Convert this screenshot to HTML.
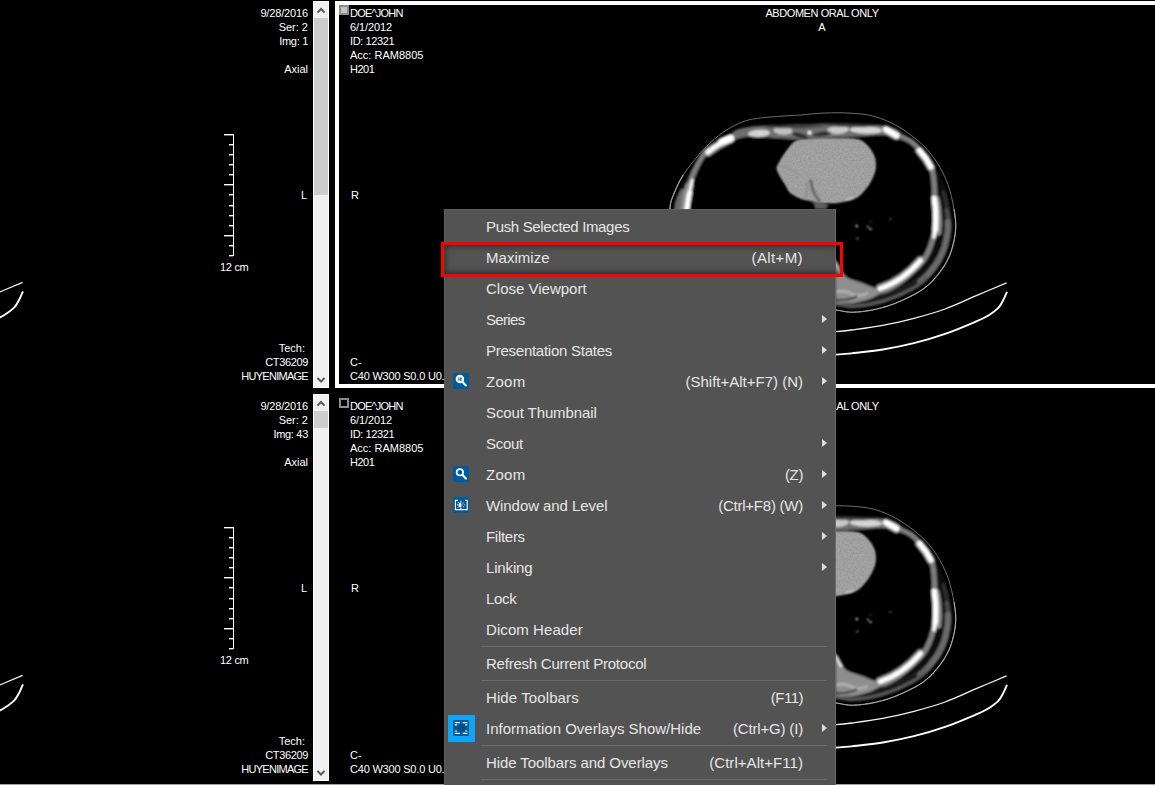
<!DOCTYPE html>
<html lang="en">
<head>
<meta charset="utf-8">
<title>Viewer</title>
<style>
html,body{margin:0;padding:0;background:#000;}
body{width:1155px;height:785px;position:relative;overflow:hidden;font-family:"Liberation Sans",sans-serif;color:#fff;}
.t{position:absolute;font-size:11px;line-height:14px;height:14px;white-space:pre;color:#fff;}
.sb{position:absolute;left:313px;width:14px;background:#f0f0f0;border:1px solid #fff;}
.sb .th{position:absolute;left:0;width:14px;background:#cdcdcd;}
.sb svg{position:absolute;left:0;display:block;}
.vp1{position:absolute;left:335px;top:1px;width:900px;height:379px;border:4px solid #fff;}
.cb{position:absolute;width:6px;height:6px;border:2px solid #8c8c8c;}
#ct{position:absolute;left:0;top:0;}
.menu{position:absolute;left:444px;top:209px;width:392px;height:600px;background:#535353;box-sizing:border-box;border-top:1px solid #5e5e5e;border-left:1px solid #5e5e5e;border-right:1px solid #6a6a6a;}
.mi{position:absolute;left:-1px;width:392px;height:31px;font-size:15px;line-height:31px;color:#e6e6e6;}
.mi .l{position:absolute;left:42px;top:0;white-space:pre;}
.mi .k{position:absolute;right:33px;top:0;white-space:pre;}
.mi .a{position:absolute;left:378px;top:11px;width:0;height:0;border-left:5px solid #dedede;border-top:4.5px solid transparent;border-bottom:4.5px solid transparent;}
.sep{position:absolute;left:36px;width:346px;height:1px;background:#6b6b6b;}
.ic{position:absolute;left:9px;width:16px;height:16px;}
.hl{position:absolute;left:441px;top:242px;width:396px;height:29px;border:3px solid #f00;box-shadow:inset 0 0 6px 1px rgba(0,0,0,.55);}
.bl{position:absolute;left:0;top:784px;width:1155px;height:1px;background:#a0a0a0;}
</style>
</head>
<body>
<svg id="ct" width="1155" height="785" viewBox="0 0 1155 785">
<defs><filter id="bl" filterUnits="userSpaceOnUse" x="640" y="90" width="400" height="300"><feGaussianBlur stdDeviation="0.9"/></filter><filter id="nz" filterUnits="userSpaceOnUse" x="640" y="90" width="400" height="300"><feGaussianBlur in="SourceGraphic" stdDeviation="0.9" result="b"/><feTurbulence type="fractalNoise" baseFrequency="0.6" numOctaves="2" seed="7" result="n"/><feColorMatrix in="n" type="matrix" values="2.2 0 0 0 -0.5  2.2 0 0 0 -0.5  2.2 0 0 0 -0.5  0 0 0 0 0.07" result="w"/><feMerge result="m"><feMergeNode in="b"/><feMergeNode in="w"/></feMerge><feComposite in="m" in2="b" operator="in"/></filter></defs>
<g id="slice">
<path d="M825.0 113.0C833.5 112.7 842.8 112.6 851.0 113.2C859.2 113.8 866.7 114.2 874.5 116.4C882.3 118.6 890.2 122.0 898.0 126.5C905.8 131.0 914.8 137.6 921.3 143.6C927.8 149.6 932.5 155.5 936.9 162.3C941.3 169.1 944.9 176.4 947.8 184.2C950.6 192.0 952.7 201.2 954.0 209.0C955.3 216.8 956.2 223.4 955.5 231.0C954.8 238.6 952.8 247.5 950.0 254.5C947.2 261.5 943.4 267.5 939.0 273.2C934.6 278.9 930.0 284.1 923.5 288.8C917.0 293.5 907.8 297.9 900.0 301.3C892.2 304.7 884.6 307.2 876.8 309.0C869.0 310.8 860.2 312.0 853.4 312.2C846.6 312.4 842.7 310.9 836.0 310.0C829.3 309.1 820.7 307.0 813.0 307.0C805.3 307.0 796.7 309.1 790.0 310.0C783.3 310.9 779.4 312.4 772.6 312.2C765.8 312.0 756.8 310.9 749.0 309.0C741.2 307.1 733.8 304.4 726.0 301.0C718.2 297.6 709.0 293.5 702.5 288.8C696.0 284.1 691.4 278.7 687.0 273.0C682.6 267.3 678.8 261.5 676.0 254.5C673.2 247.5 671.5 238.8 670.5 231.0C669.5 223.2 669.4 213.8 670.0 207.5C670.6 201.2 671.8 198.9 674.0 193.5C676.2 188.1 679.2 181.3 683.4 174.8C687.6 168.3 693.8 160.5 699.0 154.5C704.2 148.5 709.3 143.4 714.5 139.0C719.7 134.6 724.5 131.1 730.0 128.0C735.5 124.9 740.8 122.1 747.3 120.3C753.8 118.5 760.2 118.0 769.0 117.1C777.8 116.2 790.7 115.7 800.0 115.0C809.3 114.3 816.5 113.3 825.0 113.0Z" fill="none" stroke="#6c6c6c" stroke-width="1"/>
<path d="M954.0 209.0L954.3 210.9L954.6 212.8L954.9 214.7L955.1 216.5L955.3 218.3L955.5 220.1L955.6 221.9L955.7 223.7L955.7 225.5L955.7 227.3L955.6 229.1L955.5 231.0L955.3 232.9L955.1 234.9L954.7 236.9L954.4 238.9L954.0 240.9L953.5 243.0L953.0 245.0L952.5 247.0L951.9 248.9L951.3 250.8L950.7 252.7L950.0 254.5L949.3 256.2L948.5 257.9L947.7 259.6L946.9 261.2L946.0 262.8L945.1 264.3L944.2 265.9L943.2 267.4L942.2 268.9L941.2 270.3L940.1 271.8L939.0 273.2L937.9 274.6L936.8 276.0L935.6 277.4L934.5 278.7L933.3 280.1L932.0 281.4L930.8 282.7L929.4 283.9L928.0 285.2L926.6 286.4L925.1 287.6L923.5 288.8L921.8 290.0L920.0 291.1L918.2 292.3L916.2 293.4L914.3 294.5L912.2 295.5L910.2 296.6L908.1 297.6L906.0 298.6L904.0 299.5L902.0 300.4L900.0 301.3L898.1 302.1L896.1 302.9L894.2 303.7L892.3 304.4L890.3 305.1L888.4 305.7L886.5 306.4L884.5 306.9L882.6 307.5L880.7 308.0L878.7 308.5L876.8 309.0L874.8 309.4L872.8 309.9L870.8 310.2L868.8 310.6L866.8 310.9L864.7 311.2L862.7 311.5L860.8 311.7L858.8 311.9L857.0 312.0L855.1 312.1L853.4 312.2L851.8 312.2L850.2 312.2L848.8 312.0L847.4 311.9L846.0 311.7L844.7 311.5L843.3 311.2L842.0 311.0L840.6 310.7L839.2 310.5L837.6 310.2L836.0 310.0L834.3 309.8L832.5 309.5L830.6 309.2L828.7 308.8L826.8 308.5L824.9 308.2L822.9 307.9L820.9 307.6L818.9 307.3L816.9 307.2L814.9 307.0L813.0 307.0L811.1 307.0L809.1 307.2L807.1 307.3L805.1 307.6L803.1 307.9L801.1 308.2L799.2 308.5L797.3 308.8L795.4 309.2L793.5 309.5L791.7 309.8L790.0 310.0" fill="none" stroke="#a8a8a8" stroke-width="1.1"/>
<path d="M790.0 310.0L788.4 310.2L786.8 310.5L785.4 310.7L784.0 311.0L782.7 311.2L781.3 311.5L780.0 311.7L778.7 311.9L777.3 312.0L775.8 312.2L774.2 312.2L772.6 312.2L770.8 312.1L769.0 312.0L767.1 311.9L765.2 311.7L763.2 311.5L761.2 311.2L759.1 310.9L757.1 310.6L755.0 310.3L753.0 309.9L751.0 309.5L749.0 309.0L747.1 308.5L745.1 308.0L743.2 307.4L741.3 306.8L739.4 306.2L737.5 305.6L735.6 304.9L733.7 304.2L731.8 303.4L729.9 302.6L727.9 301.8L726.0 301.0L724.0 300.1L722.0 299.3L720.0 298.3L717.9 297.4L715.8 296.4L713.8 295.4L711.7 294.4L709.8 293.3L707.8 292.2L706.0 291.1L704.2 290.0L702.5 288.8L700.9 287.6L699.4 286.4L698.0 285.2L696.6 283.9L695.2 282.6L694.0 281.3L692.7 280.0L691.5 278.6L690.4 277.2L689.2 275.8L688.1 274.4L687.0 273.0L685.9 271.6L684.8 270.1L683.8 268.7L682.8 267.2L681.8 265.7L680.9 264.2L680.0 262.7L679.1 261.1L678.3 259.5L677.5 257.9L676.7 256.2L676.0 254.5L675.3 252.7L674.7 250.9L674.1 249.0L673.6 247.0L673.1 245.1L672.6 243.1L672.2 241.0L671.8 239.0L671.4 237.0L671.1 235.0L670.8 233.0L670.5 231.0L670.3 229.0L670.1 227.0L669.9 224.9L669.8 222.8L669.7 220.7L669.7 218.7L669.6 216.6L669.6 214.6L669.7 212.7L669.8 210.9L669.9 209.1L670.0 207.5L670.2 206.0L670.3 204.7L670.6 203.4L670.8 202.3L671.1 201.2L671.4 200.2L671.7 199.2L672.1 198.2L672.5 197.1L673.0 196.0L673.5 194.8L674.0 193.5L674.6 192.1L675.2 190.7L675.8 189.2L676.5 187.7L677.2 186.1L678.0 184.5L678.8 182.9L679.6 181.3L680.5 179.7L681.4 178.1L682.4 176.4L683.4 174.8" fill="none" stroke="#a8a8a8" stroke-width="1.1"/>
<g filter="url(#bl)">
<path d="M825.0 123.5C833.5 123.4 843.2 123.8 851.0 124.0C858.8 124.2 865.8 124.1 872.0 124.5C878.2 124.9 883.5 125.4 888.0 126.5C892.5 127.6 894.0 127.8 899.0 131.0C904.0 134.2 912.3 140.5 918.0 146.0C923.7 151.5 928.7 157.5 933.0 164.0C937.3 170.5 941.2 177.5 944.0 185.0C946.8 192.5 948.8 201.3 950.0 209.0C951.2 216.7 952.2 223.6 951.5 231.0C950.8 238.4 948.7 246.8 946.0 253.5C943.3 260.2 939.8 265.6 935.5 271.0C931.2 276.4 926.8 281.5 920.5 286.0C914.2 290.5 905.5 294.8 898.0 298.0C890.5 301.2 883.0 303.8 875.5 305.5C868.0 307.2 859.6 308.3 853.0 308.5C846.4 308.7 842.7 307.2 836.0 306.5C829.3 305.8 820.7 304.1 813.0 304.0C805.3 303.9 796.7 305.2 790.0 306.0C783.3 306.8 779.6 308.6 773.0 308.5C766.4 308.4 758.0 307.2 750.5 305.5C743.0 303.8 735.5 301.2 728.0 298.0C720.5 294.8 711.8 290.5 705.5 286.0C699.2 281.5 694.8 276.4 690.5 271.0C686.2 265.6 682.7 260.2 680.0 253.5C677.3 246.8 675.5 238.7 674.5 231.0C673.5 223.3 673.5 213.7 674.0 207.5C674.5 201.3 675.3 199.3 677.5 194.0C679.7 188.7 682.9 181.8 687.0 175.5C691.1 169.2 697.0 162.2 702.0 156.5C707.0 150.8 711.8 145.6 717.0 141.5C722.2 137.4 727.7 134.4 733.0 132.0C738.3 129.6 743.0 128.1 749.0 127.0C755.0 125.9 760.5 125.9 769.0 125.5C777.5 125.1 790.7 124.8 800.0 124.5C809.3 124.2 816.5 123.6 825.0 123.5Z" fill="#101010"/>
<path d="M943.6 192.1L944.1 194.1L944.7 196.1L945.2 198.1L945.7 200.2L946.1 202.2L946.5 204.2L946.9 206.2L947.3 208.2L947.6 210.1L947.9 211.9L948.2 213.8L948.4 215.5L948.7 217.3L948.8 219.0L949.0 220.6L949.1 222.3L949.2 223.9L949.2 225.5L949.2 227.1L949.1 228.8L949.0 230.4L948.8 232.2" fill="none" stroke="#2e2e2e" stroke-width="4" stroke-linecap="round"/>
<path d="M946.9 210.2L947.2 212.1L947.5 213.9L947.7 215.6L948.0 217.4L948.2 219.0L948.3 220.7L948.4 222.3L948.5 223.9L948.5 225.5L948.5 227.1L948.4 228.7" fill="none" stroke="#4a4a4a" stroke-width="4.5" stroke-linecap="round"/>
<path d="M948.0 222.3L948.1 223.9L948.1 225.5L948.1 227.1L948.0 228.7L947.9 230.3L947.8 232.1L947.5 233.8L947.2 235.6L946.9 237.5L946.5 239.4L946.1 241.2L945.7 243.1L945.2 244.9L944.7 246.7L944.1 248.5L943.5 250.1L942.9 251.7L942.3 253.3L941.6 254.7L940.9 256.2L940.2 257.6L939.4 259.0L938.6 260.4L937.8 261.8L936.9 263.2L936.0 264.5L935.0 265.9L934.0 267.2L933.0 268.6L931.9 269.9L930.9 271.2L929.8 272.5L928.8 273.7L927.7 274.9L926.6 276.1L925.4 277.3L924.3 278.4L923.0 279.5L921.8 280.5L920.5 281.6" fill="none" stroke="#6a6a6a" stroke-width="6.4" stroke-linecap="round"/>
<path d="M926.6 278.4L925.3 279.5L924.1 280.7L922.8 281.8L921.4 282.9L920.0 283.9L918.5 285.0L916.8 286.0L915.1 287.1L913.3 288.2L911.4 289.2L909.5 290.2L907.5 291.2L905.5 292.2L903.5 293.2L901.5 294.1L899.5 295.0L897.6 295.8L895.8 296.6L893.9 297.3L892.0 298.1L890.2 298.8L888.4 299.4L886.5 300.0L884.7 300.6L882.8 301.2L881.0 301.7L879.1 302.2L877.3 302.7L875.4 303.2L873.6 303.6L871.7 304.0L869.7 304.3L867.8 304.7L865.9 305.0L863.9 305.3L862.0 305.5L860.1 305.7L858.3 305.9L856.5 306.0L854.9 306.1L853.3 306.2L851.8 306.2L850.5 306.2L849.3 306.1L848.1 305.9L846.9 305.8L845.7 305.6L844.4 305.3L843.1 305.1L841.7 304.8L840.2 304.6L838.5 304.3L836.8 304.1L835.2 303.8" fill="none" stroke="#585858" stroke-width="3.6" stroke-linecap="round"/>
<path d="M756.1 304.4L754.2 304.0L752.3 303.6L750.4 303.2L748.6 302.7L746.8 302.2L744.9 301.7L743.1 301.1L741.3 300.5L739.5 299.9L737.7 299.2L735.8 298.6L734.0 297.8L732.1 297.1L730.3 296.3L728.4 295.5L726.4 294.6L724.5 293.8L722.5 292.9L720.4 291.9L718.4 291.0L716.5 290.0L714.5 289.0L712.6 288.0L710.8 287.0L709.1 286.0L707.5 285.0L706.0 283.9L704.6 282.9L703.2 281.8L701.9 280.7L700.7 279.5L699.5 278.4L698.3 277.2L697.2 275.9L696.1 274.7L695.0 273.4L693.9 272.1L692.8 270.7L691.8 269.3L690.7 268.0L689.7 266.6L688.7 265.2L687.8 263.9L686.9 262.5L686.0 261.1L685.2 259.7L684.4 258.3L683.6 256.8L682.9 255.4L682.2 253.9L681.6 252.3L681.0 250.7L680.4 249.0L679.9 247.3" fill="none" stroke="#585858" stroke-width="3.6" stroke-linecap="round"/>
<path d="M683.1 251.7L682.5 250.2L681.9 248.5L681.4 246.8L680.9 245.1L680.4 243.2L680.0 241.4L679.6 239.5L679.2 237.6L678.9 235.7L678.6 233.8L678.3 231.9L678.0 230.1L677.8 228.2L677.6 226.3L677.5 224.4L677.4 222.4L677.3 220.5L677.3 218.5L677.2 216.6L677.2 214.7L677.3 212.9L677.4 211.2L677.4 209.7L677.6 208.2L677.7 206.9L677.9 205.8L678.0 204.9L678.2 204.0L678.4 203.3L678.6 202.5L678.9 201.7L679.2 200.9L679.6 199.9L680.0 198.9L680.5 197.7L681.0 196.4L681.6 195.0L682.2 193.7L682.8 192.3" fill="none" stroke="#6a6a6a" stroke-width="6.4" stroke-linecap="round"/>
<path d="M747.3 136.6C753.5 136.0 761.5 137.0 769.0 137.4C776.5 137.8 785.7 138.8 792.5 139.0C799.3 139.2 802.9 138.8 810.0 138.5C817.1 138.2 827.3 137.8 835.0 137.5C842.7 137.2 847.6 137.0 856.0 136.6C864.4 136.2 878.2 134.6 885.5 135.0C892.8 135.4 895.3 137.0 900.0 139.0C904.7 141.0 908.7 141.9 913.5 146.8C918.3 151.7 925.9 159.8 929.0 168.6C932.1 177.4 931.6 190.6 932.2 199.7C932.9 208.8 933.3 216.6 932.9 223.4C932.5 230.2 931.5 234.8 929.7 240.5C927.9 246.2 926.0 252.0 921.9 257.7C917.8 263.4 910.2 270.1 904.8 274.8C899.3 279.5 893.6 283.4 889.2 285.7C884.8 288.0 883.0 289.3 878.3 288.8C873.6 288.3 866.7 284.7 861.2 282.6C855.8 280.5 849.8 279.8 845.6 276.4C841.4 273.0 839.5 266.7 836.2 262.3C832.9 257.9 829.9 252.9 826.0 250.0C822.1 247.1 817.3 245.0 813.0 245.0C808.7 245.0 803.9 247.1 800.0 250.0C796.1 252.9 793.1 257.9 789.8 262.3C786.5 266.7 784.6 273.0 780.4 276.4C776.2 279.8 770.2 280.5 764.8 282.6C759.3 284.7 752.4 288.3 747.7 288.8C743.0 289.3 741.2 288.0 736.8 285.7C732.4 283.4 726.7 279.5 721.2 274.8C715.8 270.1 708.2 263.4 704.1 257.7C700.0 252.0 698.3 246.2 696.3 240.5C694.3 234.8 693.1 228.9 692.0 223.4C690.9 217.9 689.4 214.6 689.6 207.5C689.9 200.4 690.6 189.8 693.5 181.0C696.4 172.2 702.4 160.3 706.8 154.5C711.2 148.7 715.9 148.2 720.0 146.0C724.1 143.8 727.2 142.6 731.7 141.0C736.2 139.4 741.1 137.2 747.3 136.6Z" fill="none" stroke="#7e7e7e" stroke-width="10.5" stroke-linejoin="round"/>
<path d="M928.1 268.9L927.1 270.2L926.1 271.3L925.0 272.5L924.0 273.6L922.9 274.7L921.8 275.7L920.7 276.8L919.5 277.8L918.3 278.7L917.0 279.7L915.6 280.7L914.1 281.6L912.5 282.6L910.7 283.6L908.9 284.6L907.1 285.6L905.2 286.6L903.2 287.5L901.3 288.4L899.4 289.3L897.4 290.2L895.6 291.0L893.8 291.8L892.0 292.5L890.2 293.2L888.4 293.9L886.6 294.5L884.9 295.1L883.1 295.7L881.3 296.2L879.6 296.7L877.8 297.2L876.0 297.7L874.3 298.1L872.5 298.5L870.6 298.9L868.8 299.2L866.9 299.6L865.1 299.9L863.2 300.1L861.4 300.4L859.6 300.6L857.9 300.7L856.2 300.9L854.6 300.9L853.2 301.0L851.9 301.0L850.8 301.0L849.8 300.9L848.7 300.8L847.7 300.6L846.6 300.5" fill="none" stroke="#2a2a2a" stroke-width="1.6" stroke-linecap="round"/>
<path d="M733.0 132.0C736.0 129.0 743.0 128.1 749.0 127.0C755.0 125.9 760.5 125.9 769.0 125.5C777.5 125.1 790.7 124.8 800.0 124.5C809.3 124.2 816.5 123.6 825.0 123.5C833.5 123.4 843.2 123.8 851.0 124.0C858.8 124.2 865.8 124.1 872.0 124.5C878.2 124.9 883.5 125.4 888.0 126.5C892.5 127.6 896.8 128.6 899.0 131.0C901.2 133.4 903.3 140.0 901.0 141.0C898.7 142.0 892.5 137.3 885.0 137.0C877.5 136.7 868.5 138.3 856.0 139.0C843.5 139.7 824.3 140.8 810.0 141.0C795.7 141.2 780.5 140.3 770.0 140.0C759.5 139.7 753.5 138.2 747.0 139.0C740.5 139.8 733.3 146.2 731.0 145.0C728.7 143.8 730.0 135.0 733.0 132.0Z" fill="#6e6e6e"/>
<path d="M836 258Q846 278 862 284Q874 289 884 290Q876 299 852 303.5L836 303Z" fill="#8e8e8e"/>
<path d="M836 292Q846 290 852 294Q858 298 868 293" fill="none" stroke="#b0b0b0" stroke-width="3"/>
<path d="M836.5 262L841 272.5" fill="none" stroke="#f0f0f0" stroke-width="3.2" stroke-linecap="round"/>
<path d="M836 300.5Q850 300.5 857 296" fill="none" stroke="#262626" stroke-width="2"/>
<path d="M747.3 136.6C753.5 136.0 761.5 137.0 769.0 137.4C776.5 137.8 785.7 138.8 792.5 139.0C799.3 139.2 802.9 138.8 810.0 138.5C817.1 138.2 827.3 137.8 835.0 137.5C842.7 137.2 847.6 137.0 856.0 136.6C864.4 136.2 878.2 134.6 885.5 135.0C892.8 135.4 895.3 137.0 900.0 139.0C904.7 141.0 908.7 141.9 913.5 146.8C918.3 151.7 925.9 159.8 929.0 168.6C932.1 177.4 931.6 190.6 932.2 199.7C932.9 208.8 933.3 216.6 932.9 223.4C932.5 230.2 931.5 234.8 929.7 240.5C927.9 246.2 926.0 252.0 921.9 257.7C917.8 263.4 910.2 270.1 904.8 274.8C899.3 279.5 893.6 283.4 889.2 285.7C884.8 288.0 883.0 289.3 878.3 288.8C873.6 288.3 866.7 284.7 861.2 282.6C855.8 280.5 849.8 279.8 845.6 276.4C841.4 273.0 839.5 266.7 836.2 262.3C832.9 257.9 829.9 252.9 826.0 250.0C822.1 247.1 817.3 245.0 813.0 245.0C808.7 245.0 803.9 247.1 800.0 250.0C796.1 252.9 793.1 257.9 789.8 262.3C786.5 266.7 784.6 273.0 780.4 276.4C776.2 279.8 770.2 280.5 764.8 282.6C759.3 284.7 752.4 288.3 747.7 288.8C743.0 289.3 741.2 288.0 736.8 285.7C732.4 283.4 726.7 279.5 721.2 274.8C715.8 270.1 708.2 263.4 704.1 257.7C700.0 252.0 698.3 246.2 696.3 240.5C694.3 234.8 693.1 228.9 692.0 223.4C690.9 217.9 689.4 214.6 689.6 207.5C689.9 200.4 690.6 189.8 693.5 181.0C696.4 172.2 702.4 160.3 706.8 154.5C711.2 148.7 715.9 148.2 720.0 146.0C724.1 143.8 727.2 142.6 731.7 141.0C736.2 139.4 741.1 137.2 747.3 136.6Z" fill="#000"/>
<ellipse cx="759" cy="133.3" rx="11" ry="3.6" fill="#d4d4d4" transform="rotate(-3 759 133.3)"/>
<ellipse cx="783" cy="130.6" rx="9.5" ry="4.2" fill="#c2c2c2" transform="rotate(4 783 130.6)"/>
<ellipse cx="838" cy="129.8" rx="11" ry="4.2" fill="#c8c8c8" transform="rotate(-4 838 129.8)"/>
<ellipse cx="866" cy="130" rx="16" ry="3.8" fill="#d6d6d6" transform="rotate(2 866 130)"/>
<ellipse cx="800" cy="135.5" rx="8" ry="2.4" fill="#2e2e2e" transform="rotate(14 800 135.5)"/>
<ellipse cx="822" cy="134" rx="9" ry="2.2" fill="#2e2e2e" transform="rotate(-8 822 134)"/>
<ellipse cx="795" cy="126.3" rx="30" ry="2.0" fill="#3c3c3c" transform="rotate(-1 795 126.3)"/>
<ellipse cx="850" cy="125.3" rx="26" ry="1.8" fill="#3c3c3c" transform="rotate(1 850 125.3)"/>
<path d="M707.8 152.2Q718 144 729.5 139" fill="none" stroke="#8c8c8c" stroke-width="8.6" stroke-linecap="round"/><path d="M707.8 152.2Q718 144 729.5 139" fill="none" stroke="#fff" stroke-width="4.6" stroke-linecap="round"/>
<path d="M722 141.5L730.5 138.3" fill="none" stroke="#fff" stroke-width="7.4" stroke-linecap="round"/>
<path d="M689.4 186Q686 197 684.6 209" fill="none" stroke="#929292" stroke-width="8" stroke-linecap="round"/>
<path d="M692.2 180Q688.8 193 687.2 208.5" fill="none" stroke="#fff" stroke-width="2.6" stroke-linecap="round"/>
<path d="M689.6 193Q688 201 687 209" fill="none" stroke="#fff" stroke-width="5" stroke-linecap="round"/>
<path d="M886 129.5L896.5 135.5" fill="none" stroke="#8c8c8c" stroke-width="8.6" stroke-linecap="round"/><path d="M886 129.5L896.5 135.5" fill="none" stroke="#fff" stroke-width="5.6" stroke-linecap="round"/>
<path d="M919.5 150.5Q926.5 158 931 167" fill="none" stroke="#8c8c8c" stroke-width="8.2" stroke-linecap="round"/><path d="M919.5 150.5Q926.5 158 931 167" fill="none" stroke="#fff" stroke-width="5.2" stroke-linecap="round"/>
<path d="M936 199Q939.5 215 938 232" fill="none" stroke="#8a8a8a" stroke-width="7" stroke-linecap="round"/>
<path d="M934.2 198.5Q936.6 214 935.2 230" fill="none" stroke="#fff" stroke-width="5.4" stroke-linecap="round"/>
<path d="M935.2 228L934 237" fill="none" stroke="#fff" stroke-width="3.4" stroke-linecap="round"/>
<path d="M920.5 260.5Q903 281 880 288.6" fill="none" stroke="#8c8c8c" stroke-width="8.6" stroke-linecap="round"/><path d="M920.5 260.5Q903 281 880 288.6" fill="none" stroke="#fff" stroke-width="4.6" stroke-linecap="round"/>
<circle cx="809.6" cy="132.6" r="1.9" fill="#fff"/>
</g>
<path d="M795.1 140.5C790.6 142.8 787.5 148.4 784.7 152.0C781.9 155.6 779.9 159.5 778.4 162.3C776.9 165.1 775.7 166.2 775.9 168.6C776.1 171.0 778.0 174.1 779.5 176.9C781.0 179.7 783.0 182.4 784.7 185.2C786.4 188.0 787.1 191.1 789.9 193.5C792.7 195.9 797.7 198.3 801.3 199.7C804.9 201.1 808.9 201.0 811.7 201.8C814.5 202.6 815.5 204.2 817.9 204.5C820.3 204.8 822.7 204.1 826.2 203.9C829.7 203.7 833.9 204.3 838.7 203.5C843.6 202.7 851.0 201.3 855.3 199.3C859.6 197.3 861.9 194.5 864.7 191.4C867.5 188.3 870.0 184.8 872.0 181.0C874.0 177.2 876.0 172.8 876.5 168.6C877.0 164.4 876.6 160.1 875.1 156.1C873.6 152.1 870.8 147.6 867.8 144.7C864.8 141.8 862.9 139.6 857.4 138.4C851.9 137.2 842.6 137.6 835.0 137.5C827.4 137.4 818.6 137.5 812.0 138.0C805.4 138.5 799.6 138.2 795.1 140.5Z" fill="#9b9b9b" filter="url(#nz)"/>
<g filter="url(#bl)"><path d="M810.6 179.5Q811.5 192 820 201.5" fill="none" stroke="#5c5c5c" stroke-width="2.4"/><path d="M806.5 183Q808 192 805 198" fill="none" stroke="#858585" stroke-width="1.6"/><path d="M779 166Q792 168 800 176" fill="none" stroke="#8e8e8e" stroke-width="1.2"/><path d="M805 197Q812 203 822 203L829 204.5L826 209H815L814 204Z" fill="#5e5e5e"/><path d="M846 199.5Q851 199 853 197" fill="none" stroke="#d0d0d0" stroke-width="1.4"/>
<circle cx="856.8" cy="226" r="1.25" fill="#d0d0d0"/>
<circle cx="867.9" cy="226.8" r="1.05" fill="#c4c4c4"/>
<circle cx="870.5" cy="229.1" r="1.15" fill="#d6d6d6"/>
<circle cx="890.3" cy="219" r="0.9" fill="#777"/>
<circle cx="870.5" cy="221.8" r="0.8" fill="#666"/>
<circle cx="857.3" cy="238.5" r="1.1" fill="#9a9a9a"/>
</g>
<g id="arcs">
<path d="M1006.6 282.8C1001.5 284.9 986.5 291.3 976.3 295.7C966.0 300.1 955.5 305.2 945.1 309.0C934.7 312.8 924.3 315.6 913.9 318.3C903.5 321.0 893.2 323.4 882.8 325.3C872.4 327.2 859.4 328.9 851.6 330.0C843.8 331.1 842.4 331.2 836.0 331.6C829.6 332.0 816.8 332.4 813.0 332.5" fill="none" stroke="#f4f4f4" stroke-width="1.3"/>
<path d="M1007.0 291.8C1006.4 293.1 1005.0 296.9 1003.5 299.6C1002.0 302.3 1000.6 305.6 998.1 308.2C995.6 310.8 992.3 313.0 988.7 315.2C985.1 317.4 983.6 318.3 976.3 321.4C969.0 324.5 955.5 330.3 945.1 333.9C934.7 337.5 924.3 340.6 913.9 343.2C903.5 345.8 893.2 347.8 882.8 349.5C872.4 351.2 859.4 352.5 851.6 353.4C843.8 354.2 842.4 354.2 836.0 354.6C829.6 355.0 816.8 355.4 813.0 355.5" fill="none" stroke="#fff" stroke-width="1.9"/>
</g>
</g>
<use href="#slice" y="393"/>
<use href="#arcs" x="-984" y="-0.5"/>
<use href="#arcs" x="-984" y="392.5"/>
<path d="M223.5 135.5H233.0M228.5 145.5H233.0M228.5 155.5H233.0M228.5 165.5H233.0M228.5 175.5H233.0M223.5 185.5H233.0M228.5 195.5H233.0M228.5 206.5H233.0M228.5 216.5H233.0M228.5 226.5H233.0M223.5 236.5H233.0M228.5 246.5H233.0M228.5 256.5H233.0" fill="none" stroke="#fff" stroke-opacity=".38" stroke-width="1" shape-rendering="crispEdges"/><path d="M233.5 134.5V255.5M223.5 134.5H233.5M228.5 144.5H233.5M228.5 154.5H233.5M228.5 164.5H233.5M228.5 174.5H233.5M223.5 184.5H233.5M228.5 194.5H233.5M228.5 205.5H233.5M228.5 215.5H233.5M228.5 225.5H233.5M223.5 235.5H233.5M228.5 245.5H233.5M228.5 255.5H233.5" fill="none" stroke="#fff" stroke-width="1" shape-rendering="crispEdges"/>
<path d="M223.5 528.5H233.0M228.5 538.5H233.0M228.5 548.5H233.0M228.5 558.5H233.0M228.5 568.5H233.0M223.5 578.5H233.0M228.5 588.5H233.0M228.5 599.5H233.0M228.5 609.5H233.0M228.5 619.5H233.0M223.5 629.5H233.0M228.5 639.5H233.0M228.5 649.5H233.0" fill="none" stroke="#fff" stroke-opacity=".38" stroke-width="1" shape-rendering="crispEdges"/><path d="M233.5 527.5V648.5M223.5 527.5H233.5M228.5 537.5H233.5M228.5 547.5H233.5M228.5 557.5H233.5M228.5 567.5H233.5M223.5 577.5H233.5M228.5 587.5H233.5M228.5 598.5H233.5M228.5 608.5H233.5M228.5 618.5H233.5M223.5 628.5H233.5M228.5 638.5H233.5M228.5 648.5H233.5" fill="none" stroke="#fff" stroke-width="1" shape-rendering="crispEdges"/>
</svg>
<div class="vp1"></div>
<div class="cb" style="left:339px;top:5px;background:#c3c3c3;"></div>
<div class="cb" style="left:339px;top:398px;"></div>
<div class="sb" style="top:1px;height:385px"><div class="th" style="top:16px;height:177px"></div><svg width="14" height="17" viewBox="0 0 14 17" style="top:0"><path d="M3.4 10.6L7 7l3.6 3.6" fill="none" stroke="#5a5a5a" stroke-width="2"/></svg><svg width="14" height="17" viewBox="0 0 14 17" style="top:368px"><path d="M3.4 7.9L7 11.5l3.6-3.6" fill="none" stroke="#5a5a5a" stroke-width="2"/></svg></div>
<div class="sb" style="top:394px;height:385px"><div class="th" style="top:16px;height:17px"></div><svg width="14" height="17" viewBox="0 0 14 17" style="top:0"><path d="M3.4 10.6L7 7l3.6 3.6" fill="none" stroke="#5a5a5a" stroke-width="2"/></svg><svg width="14" height="17" viewBox="0 0 14 17" style="top:368px"><path d="M3.4 7.9L7 11.5l3.6-3.6" fill="none" stroke="#5a5a5a" stroke-width="2"/></svg></div>
<div class="t" style="right:847px;top:6px;letter-spacing:-0.15px;">9/28/2016</div>
<div class="t" style="right:847px;top:20px;">Ser: 2</div>
<div class="t" style="right:847px;top:34px;letter-spacing:-0.3px;">Img: 1</div>
<div class="t" style="right:847px;top:62px;">Axial</div>
<div class="t" style="right:848px;top:188px;">L</div>
<div class="t" style="left:220px;top:260px;letter-spacing:-0.3px;">12 cm</div>
<div class="t" style="right:847px;top:341px;">Tech: </div>
<div class="t" style="right:847px;top:355px;letter-spacing:-0.35px;">CT36209</div>
<div class="t" style="right:847px;top:369px;letter-spacing:-0.72px;">HUYENIMAGE</div>
<div class="t" style="left:350px;top:6px;letter-spacing:-0.8px;">DOE^JOHN</div>
<div class="t" style="left:350px;top:20px;letter-spacing:-0.1px;">6/1/2012</div>
<div class="t" style="left:350px;top:34px;letter-spacing:-0.38px;">ID: 12321</div>
<div class="t" style="left:350px;top:48px;">Acc: RAM8805</div>
<div class="t" style="left:350px;top:62px;letter-spacing:-0.5px;">H201</div>
<div class="t" style="left:351px;top:188px;">R</div>
<div class="t" style="left:350px;top:355px;">C-</div>
<div class="t" style="left:350px;top:369px;letter-spacing:-0.2px;">C40 W300 S0.0 U0.0</div>
<div class="t" style="left:722px;width:200px;text-align:center;top:6px;letter-spacing:-0.43px;">ABDOMEN ORAL ONLY</div>
<div class="t" style="left:722px;width:200px;text-align:center;top:20px;">A</div>
<div class="t" style="right:847px;top:399px;letter-spacing:-0.15px;">9/28/2016</div>
<div class="t" style="right:847px;top:413px;">Ser: 2</div>
<div class="t" style="right:847px;top:427px;letter-spacing:-0.3px;">Img: 43</div>
<div class="t" style="right:847px;top:455px;">Axial</div>
<div class="t" style="right:848px;top:581px;">L</div>
<div class="t" style="left:220px;top:653px;letter-spacing:-0.3px;">12 cm</div>
<div class="t" style="right:847px;top:734px;">Tech: </div>
<div class="t" style="right:847px;top:748px;letter-spacing:-0.35px;">CT36209</div>
<div class="t" style="right:847px;top:762px;letter-spacing:-0.72px;">HUYENIMAGE</div>
<div class="t" style="left:350px;top:399px;letter-spacing:-0.8px;">DOE^JOHN</div>
<div class="t" style="left:350px;top:413px;letter-spacing:-0.1px;">6/1/2012</div>
<div class="t" style="left:350px;top:427px;letter-spacing:-0.38px;">ID: 12321</div>
<div class="t" style="left:350px;top:441px;">Acc: RAM8805</div>
<div class="t" style="left:350px;top:455px;letter-spacing:-0.5px;">H201</div>
<div class="t" style="left:351px;top:581px;">R</div>
<div class="t" style="left:350px;top:748px;">C-</div>
<div class="t" style="left:350px;top:762px;letter-spacing:-0.2px;">C40 W300 S0.0 U0.0</div>
<div class="t" style="left:722px;width:200px;text-align:center;top:399px;letter-spacing:-0.43px;">ABDOMEN ORAL ONLY</div>
<div class="bl"></div>
<div class="menu">
<div class="mi" style="top:1px"><span class="l" style="letter-spacing:-0.34px">Push Selected Images</span></div>
<div class="mi" style="top:32px"><span class="l" style="letter-spacing:0.04px">Maximize</span><span class="k" style="letter-spacing:0.39px">(Alt+M)</span></div>
<div class="mi" style="top:63px"><span class="l">Close Viewport</span></div>
<div class="mi" style="top:94px"><span class="l" style="letter-spacing:-0.67px">Series</span><span class="a"></span></div>
<div class="mi" style="top:125px"><span class="l" style="letter-spacing:-0.26px">Presentation States</span><span class="a"></span></div>
<div class="mi" style="top:156px"><svg class="ic" style="top:7px" viewBox="0 0 16 16"><rect width="16" height="16" rx="1.5" fill="#005a9e"/><circle cx="6.9" cy="6.1" r="3.4" fill="#cfe2f1" stroke="#fff" stroke-width="1.7"/><path d="M9.6 8.9L12.9 12.4" stroke="#fff" stroke-width="2.2" stroke-linecap="round"/><path d="M5.7 4.9v2.6M6.9 5h1.5v1.1h-1.4v1.3h1.6" stroke="#005a9e" stroke-width=".7" fill="none"/></svg><span class="l" style="letter-spacing:0.29px">Zoom</span><span class="k">(Shift+Alt+F7) (N)</span><span class="a"></span></div>
<div class="mi" style="top:187px"><span class="l" style="letter-spacing:-0.11px">Scout Thumbnail</span></div>
<div class="mi" style="top:218px"><span class="l" style="letter-spacing:-0.27px">Scout</span><span class="a"></span></div>
<div class="mi" style="top:249px"><svg class="ic" style="top:7px" viewBox="0 0 16 16"><rect width="16" height="16" rx="1.5" fill="#005a9e"/><circle cx="6.9" cy="6.3" r="3.2" fill="none" stroke="#fff" stroke-width="1.7"/><path d="M9.5 9L12.9 12.6" stroke="#fff" stroke-width="2.2" stroke-linecap="round"/></svg><span class="l" style="letter-spacing:0.29px">Zoom</span><span class="k" style="letter-spacing:-0.39px">(Z)</span><span class="a"></span></div>
<div class="mi" style="top:280px"><svg class="ic" style="top:7px" viewBox="0 0 16 16"><rect width="16" height="16" rx="1.5" fill="#005a9e"/><path d="M4.9 3.4H2.4V12.6H14.2V3.4H12" fill="none" stroke="#fff" stroke-width="1.1"/><path d="M8.3 5.2a2.7 2.7 0 0 0 0 5.4z" fill="#fff"/><path d="M4 7.9h1.3M5 5.3l.9.9M5 10.5l.9-.9M8 3.8v1M8 11v1" stroke="#fff" stroke-width="1"/><path d="M10.3 5.6v.9M11.6 7.4v1M10.3 9.3v.9M9.3 7.4v1" stroke="#d7e8f5" stroke-width=".9"/></svg><span class="l" style="letter-spacing:-0.07px">Window and Level</span><span class="k" style="letter-spacing:-0.24px">(Ctrl+F8) (W)</span><span class="a"></span></div>
<div class="mi" style="top:311px"><span class="l" style="letter-spacing:-0.29px">Filters</span><span class="a"></span></div>
<div class="mi" style="top:342px"><span class="l" style="letter-spacing:-0.16px">Linking</span><span class="a"></span></div>
<div class="mi" style="top:373px"><span class="l" style="letter-spacing:-0.3px">Lock</span></div>
<div class="mi" style="top:404px"><span class="l" style="letter-spacing:0.07px">Dicom Header</span></div>
<div class="sep" style="top:436px"></div>
<div class="mi" style="top:438px"><span class="l" style="letter-spacing:-0.23px">Refresh Current Protocol</span></div>
<div class="sep" style="top:470px"></div>
<div class="mi" style="top:472px"><span class="l" style="letter-spacing:0.1px">Hide Toolbars</span><span class="k" style="letter-spacing:-0.49px">(F11)</span></div>
<div class="mi" style="top:503px"><div style="position:absolute;left:4px;top:2px;width:27px;height:27px;background:#0ea5f7"></div><svg class="ic" style="top:7px" viewBox="0 0 16 16"><rect width="16" height="16" rx="1.5" fill="#005a9e"/><path d="M1.8 2.7H6.8M9.7 2.7H14.4M1.8 13.3H6.8M9.7 13.3H14.4" stroke="#fff" stroke-width="1.3"/><path d="M1.8 4.9H4.2M12.2 4.9H14.4M1.8 11H4.2M12.2 11H14.4" stroke="#e6f0f8" stroke-width="1.1"/><circle cx="8.2" cy="8" r="3.6" fill="#004a86"/></svg><span class="l">Information Overlays Show/Hide</span><span class="k" style="letter-spacing:-0.17px">(Ctrl+G) (I)</span><span class="a"></span></div>
<div class="sep" style="top:535px"></div>
<div class="mi" style="top:537px"><span class="l" style="letter-spacing:-0.08px">Hide Toolbars and Overlays</span><span class="k" style="letter-spacing:0.05px">(Ctrl+Alt+F11)</span></div>
<div class="sep" style="top:569px"></div>
</div>
<div class="hl"></div>
</body>
</html>
